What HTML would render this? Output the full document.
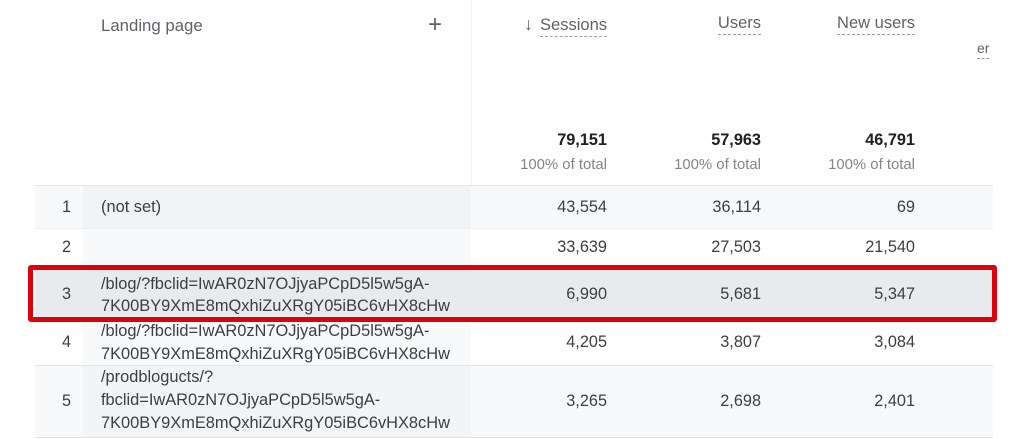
<!DOCTYPE html>
<html><head><style>
body{margin:0;width:1024px;height:439px;background:#fff;font-family:"Liberation Sans",Arial,sans-serif;position:relative;overflow:hidden;color:#3c4043}
.a{position:absolute;white-space:nowrap}
.h{font-size:16.5px;color:#5f6368}
.u{border-bottom:1.5px dashed #9aa0a6;padding-bottom:2px}
.n{font-size:16.3px}
.l{font-size:16.4px}
.bg{position:absolute}
</style></head><body>
<div class="bg" style="left:471px;top:0;width:1px;height:185px;background:#f1f2f3"></div>
<div class="bg" style="left:35px;top:185px;width:958px;height:1px;background:#e3e5e8"></div>
<div class="bg" style="left:35px;top:186px;width:958px;height:42px;background:#f8f9fa"></div>
<div class="bg" style="left:83px;top:186px;width:388px;height:42px;background:#f1f3f4"></div>
<div class="bg" style="left:35px;top:228px;width:958px;height:1px;background:#eceef0"></div>
<div class="bg" style="left:83px;top:229px;width:388px;height:36px;background:#f8f9fa"></div>
<div class="bg" style="left:35px;top:267px;width:958px;height:52px;background:#e8eaed"></div>
<div class="bg" style="left:83px;top:322px;width:388px;height:43px;background:#f8f9fa"></div>
<div class="bg" style="left:35px;top:365px;width:958px;height:1px;background:#e3e5e8"></div>
<div class="bg" style="left:35px;top:366px;width:958px;height:71px;background:#f8f9fa"></div>
<div class="bg" style="left:83px;top:366px;width:388px;height:71px;background:#f3f4f5"></div>
<div class="bg" style="left:35px;top:437px;width:958px;height:1px;background:#e3e5e8"></div>
<div class="bg" style="left:28px;top:265px;width:959px;height:47px;border:5px solid #d9020f;border-radius:3px"></div>
<div class="a h" style="left:101px;top:16px;font-size:16.8px">Landing page</div>
<div class="a" style="left:428px;top:11px;font-size:24px;color:#5f6368">+</div>
<div class="a h" style="right:417px;top:14px"><span style="margin-right:7px;font-size:18px">↓</span><span class="u">Sessions</span></div>
<div class="a h" style="right:263px;top:14px"><span class="u">Users</span></div>
<div class="a h" style="right:109px;top:14px"><span class="u">New users</span></div>
<div class="a h" style="left:977px;top:40px;font-size:14px"><span class="u">er</span></div>
<div class="a n" style="right:417px;top:131px;font-weight:bold;color:#202124">79,151</div>
<div class="a n" style="right:263px;top:131px;font-weight:bold;color:#202124">57,963</div>
<div class="a n" style="right:109px;top:131px;font-weight:bold;color:#202124">46,791</div>
<div class="a" style="right:417px;top:157px;font-size:14.9px;color:#80868b">100% of total</div>
<div class="a" style="right:263px;top:157px;font-size:14.9px;color:#80868b">100% of total</div>
<div class="a" style="right:109px;top:157px;font-size:14.9px;color:#80868b">100% of total</div>

<div class="a n" style="left:62px;top:198px">1</div>
<div class="a l" style="left:101px;top:198px">(not set)</div>
<div class="a n" style="right:417px;top:198px">43,554</div>
<div class="a n" style="right:263px;top:198px">36,114</div>
<div class="a n" style="right:109px;top:198px">69</div>

<div class="a n" style="left:62px;top:238px">2</div>
<div class="a n" style="right:417px;top:238px">33,639</div>
<div class="a n" style="right:263px;top:238px">27,503</div>
<div class="a n" style="right:109px;top:238px">21,540</div>

<div class="a n" style="left:62px;top:285px">3</div>
<div class="a l" style="left:101px;top:273px;line-height:22px">/blog/?fbclid=IwAR0zN7OJjyaPCpD5l5w5gA-<br>7K00BY9XmE8mQxhiZuXRgY05iBC6vHX8cHw</div>
<div class="a n" style="right:417px;top:285px">6,990</div>
<div class="a n" style="right:263px;top:285px">5,681</div>
<div class="a n" style="right:109px;top:285px">5,347</div>

<div class="a n" style="left:62px;top:333px">4</div>
<div class="a l" style="left:101px;top:320px;line-height:23px">/blog/?fbclid=IwAR0zN7OJjyaPCpD5l5w5gA-<br>7K00BY9XmE8mQxhiZuXRgY05iBC6vHX8cHw</div>
<div class="a n" style="right:417px;top:333px">4,205</div>
<div class="a n" style="right:263px;top:333px">3,807</div>
<div class="a n" style="right:109px;top:333px">3,084</div>

<div class="a n" style="left:62px;top:392px">5</div>
<div class="a l" style="left:101px;top:366px;line-height:23px">/prodblogucts/?<br>fbclid=IwAR0zN7OJjyaPCpD5l5w5gA-<br>7K00BY9XmE8mQxhiZuXRgY05iBC6vHX8cHw</div>
<div class="a n" style="right:417px;top:392px">3,265</div>
<div class="a n" style="right:263px;top:392px">2,698</div>
<div class="a n" style="right:109px;top:392px">2,401</div>
</body></html>
